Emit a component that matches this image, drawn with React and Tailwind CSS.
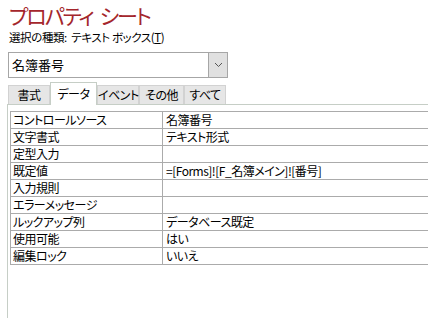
import React from "react";

const rows = [
  ["コントロールソース", "名簿番号"],
  ["文字書式", "テキスト形式"],
  ["定型入力", ""],
  ["既定値", "=[Forms]![F_名簿メイン]![番号]"],
  ["入力規則", ""],
  ["エラーメッセージ", ""],
  ["ルックアップ列", "データベース既定"],
  ["使用可能", "はい"],
  ["編集ロック", "いいえ"],
];

const tabs = ["書式", "データ", "イベント", "その他", "すべて"];
const tabWidths = ["w-[42px]", "w-[47px]", "w-[42px]", "w-[45px]", "w-[42px]"];

const App = () => {
  return (
    <div className="w-[428px] h-[318px] bg-white overflow-hidden text-black font-['Noto_Sans_CJK_JP','Noto_Sans',sans-serif] [font-feature-settings:'palt']">
      {/* Title */}
      <div className="pl-[9px] pt-[3px] flex gap-[7px] text-[21px] leading-[24px] tracking-[-2px] text-[#a4262c] whitespace-nowrap">
        <span>プロパティ</span>
        <span>シート</span>
      </div>
      <div className="pl-[9px] mt-[3px] text-[11.5px] leading-[14px] tracking-[-0.4px] whitespace-nowrap">
        選択の種類:&nbsp;&nbsp;テキスト ボックス(<span className="underline">T</span>)
      </div>

      {/* Combo box */}
      <div className="ml-[8px] mt-[8px] w-[220px] h-[26px] border border-[#a6a6a6] flex items-stretch">
        <div className="flex-1 pl-[3px] text-[13px] leading-[24px]">名簿番号</div>
        <div className="w-[19px] border-l border-[#a6a6a6] bg-[#e0e0e0] flex items-center justify-center">
          <svg width="9" height="6" viewBox="0 0 9 6">
            <polyline points="1,1 4.5,4.5 8,1" fill="none" stroke="#555" strokeWidth="1" />
          </svg>
        </div>
      </div>

      {/* Tabs */}
      <div className="ml-[8px] mt-[4px] h-[22px] flex items-end relative z-10">
        {tabs.map((t, i) =>
          i === 1 ? (
            <div
              key={t}
              className={`${tabWidths[i]} h-[23px] -mb-px bg-white border border-b-0 border-[#c6cec6] text-[12px] leading-[22px] tracking-[-0.5px] text-center whitespace-nowrap`}
            >
              {t}
            </div>
          ) : (
            <div
              key={t}
              className={`${tabWidths[i]} h-[19px] bg-[#e6e6e6] border border-b-0 border-[#d2d2d2] text-[12px] leading-[18px] tracking-[-0.5px] text-center whitespace-nowrap`}
            >
              {t}
            </div>
          )
        )}
      </div>

      {/* Panel */}
      <div className="ml-[7px] h-[220px] border-l border-t border-[#c6cec6] pt-[6px] pl-[2px]">
        <div className="border-l border-t border-[#ababab]">
          {rows.map(([k, v]) => (
            <div key={k} className="flex h-[17px] border-b border-[#ababab] text-[12px] leading-[16px] tracking-[-0.5px]">
              <div className="w-[152px] pl-[2px] border-r border-[#ababab] whitespace-nowrap">
                {k}
              </div>
              <div className="flex-1 pl-[3px] whitespace-nowrap">{v}</div>
            </div>
          ))}
        </div>
      </div>
    </div>
  );
};

export default App;
